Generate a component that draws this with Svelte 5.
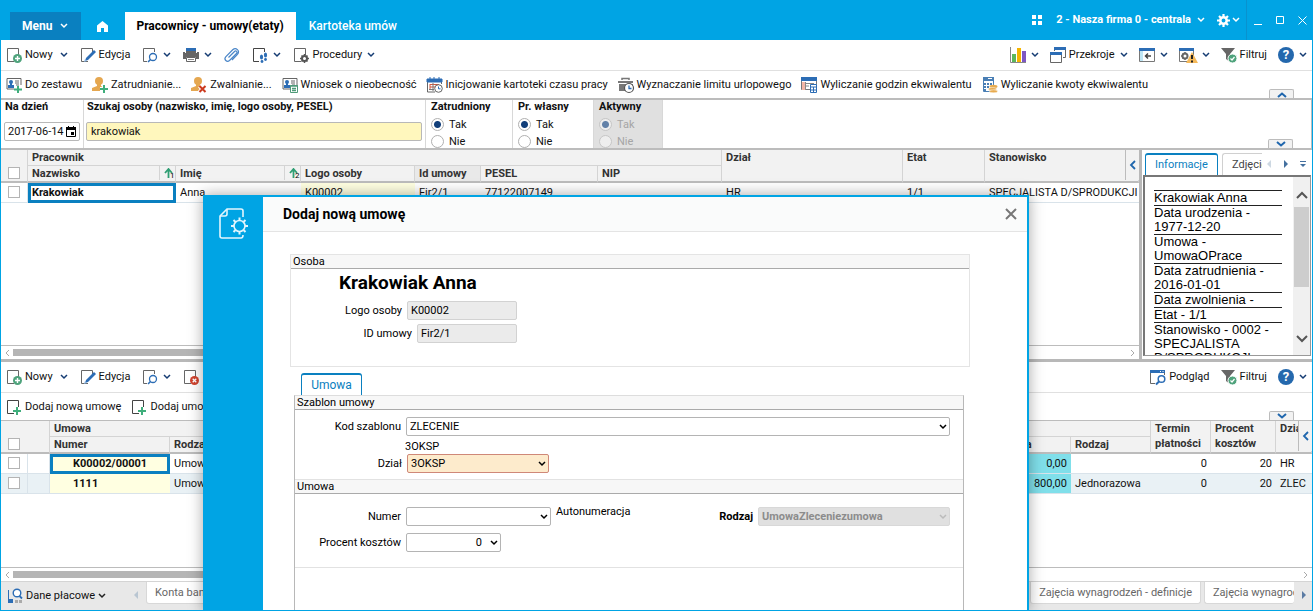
<script>
	let day = $state('2017-06-14');
	let search = $state('krakowiak');
	let employed = $state('Tak');
	let own = $state('Tak');
	let active = $state('Tak');
	let template = $state('ZLECENIE');
	let department = $state('3OKSP');
	let number = $state('');
	let percent = $state('0');

	const actions = [
		{ icon: 'set', label: 'Do zestawu' },
		{ icon: 'hire', label: 'Zatrudnianie...' },
		{ icon: 'fire', label: 'Zwalnianie...' },
		{ icon: 'absence', label: 'Wniosek o nieobecność' },
		{ icon: 'calendar', label: 'Inicjowanie kartoteki czasu pracy' },
		{ icon: 'leave', label: 'Wyznaczanie limitu urlopowego' },
		{ icon: 'hours', label: 'Wyliczanie godzin ekwiwalentu' },
		{ icon: 'amount', label: 'Wyliczanie kwoty ekwiwalentu' }
	];

	const info = [
		'Krakowiak Anna',
		'Data urodzenia - 1977-12-20',
		'Umowa - UmowaOPrace',
		'Data zatrudnienia - 2016-01-01',
		'Data zwolnienia -',
		'Etat - 1/1',
		'Stanowisko - 0002 - SPECJALISTA D/SPRODUKCJI'
	];

	const contracts = [
		{ number: 'K00002/00001', kind: 'UmowaZlecenie', amount: '0,00', type: '', term: 0, percent: 20, dept: 'HR' },
		{ number: '1111', kind: 'UmowaZlecenie', amount: '800,00', type: 'Jednorazowa', term: 0, percent: 20, dept: 'ZLEC' }
	];
</script>

{#snippet chevron(cls = '')}
	<svg class="chev {cls}" width="8" height="6" viewBox="0 0 8 6"><path d="M1 1l3 3 3-3" fill="none" stroke="currentColor" stroke-width="1.5" /></svg>
{/snippet}

{#snippet page()}
	<path d="M8 14.5H1.500V1.500H12.500V8" fill="none" stroke="#666" />
{/snippet}

{#snippet person()}
	<circle cx="7" cy="4" r="4" fill="#e5a750" />
	<path d="M5 6h4v3l4 2v3H0v-3l5-2z" fill="#e5a750" />
{/snippet}

{#snippet card()}
	<path d="M1 12V1.500H15V8M8 12H1" fill="none" stroke="#666" />
	<circle cx="5" cy="5" r="2" fill="#2c6db5" />
	<path d="M2 11V8h6v3zM4 6h2v3H4z" fill="#2c6db5" />
	<path d="M9 4h4M9 6h4M10 8h3" stroke="#666" />
{/snippet}

{#snippet icon(name)}
	<svg class="icon" width="16" height="16" viewBox="0 0 16 16" aria-hidden="true">
		{#if name === 'new'}
			{@render page()}
			<circle cx="11.500" cy="11.500" r="4.500" fill="#4fa37c" />
			<path d="M9 11.500h5M11.500 9v5" stroke="#fff" stroke-width="1.400" />
		{:else if name === 'edit'}
			{@render page()}
			<path d="M5 14l1-3 8-8 2 2-8 8z" fill="#2c6db5" />
			<path d="M4 15l1-3 2 2z" fill="#8ab4e0" />
		{:else if name === 'find'}
			<path d="M5 14.500H1.500V1.500H12.500V5" fill="none" stroke="#666" />
			<circle cx="11" cy="10" r="3.500" fill="#fff" stroke="#2c6db5" stroke-width="1.300" />
			<path d="M8.500 12.500L6 15" stroke="#2c6db5" stroke-width="1.600" />
		{:else if name === 'delete'}
			{@render page()}
			<circle cx="11.500" cy="11.500" r="4.500" fill="#d0432e" />
			<path d="M9.700 9.700l3.600 3.600M13.300 9.700l-3.600 3.600" stroke="#fff" stroke-width="1.300" />
		{:else if name === 'print'}
			<path d="M3 1h10v4H3z" fill="#2c6db5" />
			<path d="M0 5h2v1h12V5h2v7h-3v-2H3v2H0z" fill="#666" />
			<path d="M3 4h10v2H3z" fill="#666" />
			<path d="M3.500 10.500h9v4h-9z" fill="#fff" stroke="#666" />
			<path d="M5 12.500h6" stroke="#888" />
		{:else if name === 'clip'}
			<path d="M4.500 10.500l6-6c1.500-1.500 3.500.5 2 2l-7 7c-2.600 2.200-6-1-3.800-3.700l7-7c3.300-3 7.600 1 4.800 4.500l-5.500 5.700" fill="none" stroke="#4a86c8" stroke-width="1.200" />
		{:else if name === 'steps'}
			<path d="M7 14.500H1.500V1.500H12.500V5" fill="none" stroke="#444" />
			<ellipse cx="9.500" cy="10" rx="1.600" ry="2.600" fill="#2c6db5" />
			<ellipse cx="13.500" cy="8" rx="1.600" ry="2.600" fill="#2c6db5" />
			<circle cx="10" cy="14.500" r="1.400" fill="#2c6db5" />
			<circle cx="13.500" cy="12.500" r="1.400" fill="#2c6db5" />
		{:else if name === 'proc'}
			{@render page()}
			<circle cx="11.500" cy="11.500" r="2.500" fill="#fff" stroke="#555" stroke-width="2" />
			<path d="M11.500 7v2M11.500 14v2M7 11.500h2M14 11.500h2M8.500 8.500l1 1M13.500 13.500l1 1M14.500 8.500l-1 1M9.500 13.500l-1 1" stroke="#555" stroke-width="1.500" />
		{:else if name === 'add'}
			<path d="M8 14.500H1.500V1.500H12.500V8" fill="none" stroke="#444" />
			<path d="M7 12h8M11 8v8" stroke="#3fae7c" stroke-width="2" />
		{:else if name === 'set'}
			{@render card()}
			<path d="M8 12.500h8M12 9v7" stroke="#3fae7c" stroke-width="2" />
		{:else if name === 'hire'}
			{@render person()}
			<path d="M8 12h8M12 8v8" stroke="#fff" stroke-width="4" />
			<path d="M8 12h8M12 8v8" stroke="#3fae7c" stroke-width="2" />
		{:else if name === 'fire'}
			{@render person()}
			<path d="M8.500 9l6 6M14.500 9l-6 6" stroke="#fff" stroke-width="4" />
			<path d="M8.500 9l6 6M14.500 9l-6 6" stroke="#cc3a1e" stroke-width="2" />
		{:else if name === 'absence'}
			{@render card()}
			<path d="M8.500 8.500h7v7h-7z" fill="#fff" stroke="#4f9a78" />
			<path d="M8 9h8M10 11.500h4M10 13.500h4" stroke="#4f9a78" stroke-width="1.300" />
		{:else if name === 'calendar'}
			<path d="M.5 3v12H8M14.500 3v4" fill="none" stroke="#666" />
			<path d="M0 2h15v3H0zM3 0v3M7 0v3M12 0v3" fill="#2c6db5" stroke="#2c6db5" />
			<path d="M3 7.500h9M3 7v6M3 10h5" stroke="#d0573e" fill="none" />
			<path d="M6 6v8M2 12.500h5" stroke="#777" fill="none" />
			<circle cx="11.500" cy="11.500" r="3.800" fill="#fff" stroke="#666" />
			<path d="M11.500 9.500v2.300h2" stroke="#2c6db5" fill="none" />
		{:else if name === 'leave'}
			<path d="M4 3V1.500h7V3" fill="none" stroke="#777" stroke-width="1.500" />
			<path d="M0 4h15v2H0zM1 7h14v7H1z" fill="#777" />
			<circle cx="11" cy="11" r="4.500" fill="#fff" stroke="#555" stroke-width="1.200" />
			<path d="M11 8.500v3h2.500" stroke="#2c6db5" stroke-width="1.300" fill="none" />
		{:else if name === 'hours'}
			<path d="M.5.5h15v12H.5z" fill="#fff" stroke="#777" />
			<path d="M0 0h16v4H0z" fill="#2c6db5" />
			<path d="M1 5h3v8H1z" fill="#f3b5a5" />
			<path d="M5 6.500h8M5 9h3M4.500 5v8" stroke="#888" />
			<path d="M9.500 7.500h6v8h-6zM9.500 10h6M12.500 10v5.500M9.500 13h6" fill="#fff" stroke="#2c6db5" />
		{:else if name === 'amount'}
			<path d="M1.500.5h10v14h-10z" fill="#fff" stroke="#4a7fb5" />
			<path d="M1 0h11v4H1zM2 6h2v2H2zM5 6h2v2H5zM8 6h2v2H8zM2 9h2v2H2zM5 9h2v2H5zM2 12h2v2H2z" fill="#4a7fb5" />
			<path d="M6 1.500h4" stroke="#fff" />
			<ellipse cx="11.500" cy="9.500" rx="4" ry="1.700" fill="#e8ab4f" />
			<ellipse cx="10.500" cy="12" rx="4" ry="1.500" fill="#e8ab4f" stroke="#fff" stroke-width=".5" />
			<ellipse cx="11.500" cy="14.300" rx="4" ry="1.500" fill="#e8ab4f" stroke="#fff" stroke-width=".5" />
		{:else if name === 'chart'}
			<path d="M.5 0v15.500H16" fill="none" stroke="#888" />
			<path d="M2 7h4v8H2z" fill="#5cb85c" />
			<path d="M7 1h4v14H7z" fill="#f5b400" />
			<path d="M12 4h4v11h-4z" fill="#7e57c2" />
		{:else if name === 'windows'}
			<path d="M4.500 4V1M15.500 1v9.500H13" fill="none" stroke="#666" />
			<path d="M4 0h12v3H4z" fill="#2c6db5" />
			<path d="M.5 6.500h11v9H.5z" fill="#fff" stroke="#666" />
			<path d="M0 5h12v3H0z" fill="#2c6db5" />
		{:else if name === 'panel'}
			<path d="M.5 1.500h15v13H.5z" fill="#fff" stroke="#777" />
			<path d="M1 4h3v10H1z" fill="#bfe6f5" />
			<path d="M0 1h16v3H0z" fill="#2c6db5" />
			<path d="M12 9H7M9 6.500L6.500 9 9 11.500" fill="none" stroke="#444" stroke-width="1.500" />
		{:else if name === 'warning'}
			<path d="M.5 1.500h14v13H.5z" fill="#fff" stroke="#777" />
			<path d="M0 1h15v3H0z" fill="#2c6db5" />
			<circle cx="6" cy="9" r="2.500" fill="none" stroke="#666" stroke-width="2" />
			<path d="M6 5v2M6 11v2M2 9h2M3.500 6.500l1 1M3.500 11.500l1-1" stroke="#666" stroke-width="1.500" />
			<path d="M13 5l6 11H7z" fill="#f5b95a" />
			<path d="M13 8v4M13 13.500v2" stroke="#222" stroke-width="2" />
		{:else if name === 'filter'}
			<path d="M0 1h14L9 7v8l-4-3V7z" fill="#666" />
			<circle cx="11.500" cy="11.500" r="4.500" fill="#4fa37c" stroke="#fff" />
			<path d="M9.500 11.500l1.500 1.500 2.500-3" fill="none" stroke="#fff" stroke-width="1.200" />
		{:else if name === 'preview'}
			<path d="M5 14.500H.5V1.500h14V6" fill="none" stroke="#666" />
			<path d="M0 1h15v3H0z" fill="#2c6db5" />
			<path d="M10 2.500h1M12.500 2.500h1" stroke="#fff" />
			<circle cx="11.500" cy="10" r="3.300" fill="#fff" stroke="#2c6db5" stroke-width="1.500" />
			<path d="M9 12.500L6 15.500" stroke="#2c6db5" stroke-width="2" />
		{:else if name === 'pay'}
			<path d="M1.500 2v13" stroke="#2c6db5" />
			<path d="M1 11h5v4H1z" fill="#2c6db5" />
			<circle cx="10" cy="5" r="3.800" fill="#fff" stroke="#2c6db5" stroke-width="1.400" />
			<path d="M12.500 8L15 10.500" stroke="#2c6db5" stroke-width="1.800" />
			<path d="M8 12h3v3H8zM12 12h3v3h-3z" fill="#aaa" />
		{/if}
	</svg>
{/snippet}

{#snippet help()}
	<button class="tool" aria-label="Pomoc"><span class="help">?</span>{@render chevron()}</button>
{/snippet}

{#snippet yesNo(title, name, value, off)}
	<fieldset class="choice" class:off disabled={off}>
		<legend>{title}</legend>
		<label><input type="radio" {name} value="Tak" checked={value === 'Tak'} />Tak</label>
		<label><input type="radio" {name} value="Nie" checked={value === 'Nie'} />Nie</label>
	</fieldset>
{/snippet}

{#snippet sorted(n)}
	<span class="sort"><svg width="10" height="10" viewBox="0 0 10 10"><path d="M4.500 10V1M1 5l3.500-4L8 5" fill="none" stroke="#2f9e73" stroke-width="1.800" /></svg><small>{n}</small></span>
{/snippet}

{#snippet scroller()}
	<div class="scroller">
		<svg width="5" height="8" viewBox="0 0 5 8"><path d="M4 1L1 4l3 3" fill="none" stroke="#aaa" /></svg>
		<div class="track"><div class="thumb"></div></div>
		<svg width="5" height="8" viewBox="0 0 5 8"><path d="M1 1l3 3-3 3" fill="none" stroke="#aaa" /></svg>
	</div>
{/snippet}

<div class="app">
	<header>
		<button class="menu">Menu {@render chevron('wide')}</button>
		<button class="home" aria-label="Start"><svg width="11" height="11" viewBox="0 0 11 11"><path d="M5.500 0L11 4.500V11H7V7H4v4H0V4.500z" fill="#fff" /></svg></button>
		<a class="tab current" href="#pracownicy">Pracownicy - umowy(etaty)</a>
		<a class="tab" href="#kartoteka">Kartoteka umów</a>
		<div class="company">
			<svg width="10" height="10" viewBox="0 0 10 10"><path d="M0 0h4v4H0zM6 0h4v4H6zM0 6h4v4H0zM6 6h4v4H6z" fill="#fff" /></svg>
			<button class="firm">2 - Nasza firma 0 - centrala {@render chevron()}</button>
			<button class="gear" aria-label="Ustawienia">
				<svg width="13" height="13" viewBox="0 0 13 13"><circle cx="6.500" cy="6.500" r="3.200" fill="none" stroke="#fff" stroke-width="2.500" /><path d="M6.500 0v3M6.500 10v3M0 6.500h3M10 6.500h3M2 2l2 2M9 9l2 2M11 2L9 4M4 9l-2 2" stroke="#fff" stroke-width="2.200" /></svg>
				{@render chevron()}
			</button>
		</div>
		<div class="window">
			<button aria-label="Minimalizuj"><svg width="9" height="9" viewBox="0 0 9 9"><path d="M0 8.500h8" stroke="#fff" /></svg></button>
			<button aria-label="Maksymalizuj"><svg width="9" height="9" viewBox="0 0 9 9"><path d="M.5.500h7v7h-7z" fill="none" stroke="#fff" /></svg></button>
			<button aria-label="Zamknij"><svg width="9" height="9" viewBox="0 0 9 9"><path d="M.5.500l8 8M8.500.500l-8 8" stroke="#fff" /></svg></button>
		</div>
	</header>

	<div class="toolbar">
		<button class="tool">{@render icon('new')}Nowy {@render chevron('far')}</button>
		<button class="tool">{@render icon('edit')}Edycja</button>
		<button class="tool" aria-label="Szukaj">{@render icon('find')}{@render chevron()}</button>
		<button class="tool" aria-label="Drukuj">{@render icon('print')}{@render chevron()}</button>
		<button class="tool" aria-label="Załączniki">{@render icon('clip')}</button>
		<button class="tool" aria-label="Kroki">{@render icon('steps')}{@render chevron()}</button>
		<button class="tool">{@render icon('proc')}Procedury {@render chevron()}</button>
		<div class="right">
			<button class="tool" aria-label="Wykres">{@render icon('chart')}{@render chevron()}</button>
			<button class="tool">{@render icon('windows')}Przekroje {@render chevron()}</button>
			<button class="tool" aria-label="Panel">{@render icon('panel')}{@render chevron()}</button>
			<button class="tool" aria-label="Ostrzeżenia">{@render icon('warning')}{@render chevron('far')}</button>
			<button class="tool">{@render icon('filter')}Filtruj</button>
			{@render help()}
		</div>
	</div>

	<div class="toolbar actions">
		{#each actions as a}
			<button class="tool">{@render icon(a.icon)}{a.label}</button>
		{/each}
		<button class="fold" aria-label="Zwiń"><svg class="up" width="12" height="7" viewBox="0 0 12 7"><path d="M2 1l4 3.500L10 1" fill="none" stroke="#1f66ad" stroke-width="2" /></svg></button>
	</div>

	<div class="filters">
		<div class="filter day">
			<label for="day">Na dzień</label>
			<div class="date">
				<input id="day" type="text" bind:value={day} />
				<svg width="10" height="11" viewBox="0 0 10 11"><path d="M.500 2h9v8.500h-9zM2.500 0v3M7.500 0v3" fill="none" stroke="#000" /><path d="M0 1h10v3H0zM5 6h3v3H5z" /></svg>
			</div>
		</div>
		<div class="filter query">
			<label for="query">Szukaj osoby (nazwisko, imię, logo osoby, PESEL)</label>
			<input id="query" type="text" bind:value={search} />
		</div>
		{@render yesNo('Zatrudniony', 'employed', employed, false)}
		{@render yesNo('Pr. własny', 'own', own, false)}
		{@render yesNo('Aktywny', 'active', active, true)}
		<button class="fold" aria-label="Rozwiń"><svg width="12" height="7" viewBox="0 0 12 7"><path d="M2 1l4 3.500L10 1" fill="none" stroke="#1f66ad" stroke-width="2" /></svg></button>
	</div>

	<div class="upper">
		<div class="grid">
			<div class="rows">
				<table class="people">
					<colgroup>
						<col class="w-check" /><col class="w-name" /><col class="w-first" /><col class="w-logo" /><col class="w-id" />
						<col class="w-pesel" /><col class="w-nip" /><col class="w-dept" /><col class="w-etat" /><col />
					</colgroup>
					<thead>
						<tr>
							<th rowspan="2" class="low"><input type="checkbox" aria-label="Zaznacz wszystkie" /></th>
							<th colspan="6" class="group">Pracownik</th>
							<th rowspan="2">Dział</th>
							<th rowspan="2">Etat</th>
							<th rowspan="2">Stanowisko</th>
						</tr>
						<tr>
							<th><div class="sortable">Nazwisko {@render sorted(1)}</div></th>
							<th><div class="sortable">Imię {@render sorted(2)}</div></th>
							<th>Logo osoby</th>
							<th class="dim">Id umowy</th>
							<th>PESEL</th>
							<th>NIP</th>
						</tr>
					</thead>
					<tbody>
						<tr>
							<td class="check"><input type="checkbox" aria-label="Zaznacz" /></td>
							<td class="picked">Krakowiak</td>
							<td>Anna</td>
							<td class="key">K00002</td>
							<td>Fir2/1</td>
							<td>77122007149</td>
							<td></td>
							<td>HR</td>
							<td>1/1</td>
							<td>SPECJALISTA D/SPRODUKCJI</td>
						</tr>
					</tbody>
				</table>
				<button class="side-fold" aria-label="Kolumny"><svg width="7" height="10" viewBox="0 0 7 10"><path d="M6 1L2 5l4 4" fill="none" stroke="#1f66ad" stroke-width="1.800" /></svg></button>
			</div>
			{@render scroller()}
		</div>
		<aside>
			<nav>
				<a class="side-tab on" href="#informacje">Informacje</a>
				<a class="side-tab" href="#zdjecie">Zdjęcie</a>
				<svg width="40" height="8" viewBox="0 0 40 8"><path d="M5 0v8L1 4z" fill="#cdd8e2" /><path d="M18 0v8l4-4z" fill="#44709f" /><path d="M34 1.500h6" stroke="#44709f" /><path d="M34 4h6l-3 3z" fill="#44709f" /></svg>
			</nav>
			<div class="info">
				<ul>
					{#each info as line}
						<li>{line}</li>
					{/each}
				</ul>
				<div class="vscroll">
					<svg width="12" height="8" viewBox="0 0 12 8"><path d="M1 7l5-5 5 5" fill="none" stroke="#555" stroke-width="2" /></svg>
					<div class="vtrack"><div class="vthumb"></div></div>
					<svg width="12" height="8" viewBox="0 0 12 8"><path d="M1 1l5 5 5-5" fill="none" stroke="#555" stroke-width="2" /></svg>
				</div>
			</div>
		</aside>
	</div>

	<div class="lower">
		<div class="toolbar">
			<button class="tool">{@render icon('new')}Nowy {@render chevron('far')}</button>
			<button class="tool">{@render icon('edit')}Edycja</button>
			<button class="tool" aria-label="Szukaj">{@render icon('find')}{@render chevron()}</button>
			<button class="tool" aria-label="Usuń">{@render icon('delete')}</button>
			<div class="right">
				<button class="tool">{@render icon('preview')}Podgląd</button>
				<button class="tool">{@render icon('filter')}Filtruj</button>
				{@render help()}
			</div>
		</div>
		<div class="toolbar actions second">
			<button class="tool">{@render icon('add')}Dodaj nową umowę</button>
			<button class="tool">{@render icon('add')}Dodaj umowę</button>
			<button class="fold" aria-label="Rozwiń"><svg width="12" height="7" viewBox="0 0 12 7"><path d="M2 1l4 3.500L10 1" fill="none" stroke="#1f66ad" stroke-width="2" /></svg></button>
		</div>
		<div class="rows">
			<table class="contracts">
				<colgroup>
					<col class="w-check" /><col class="w-mark" /><col class="w-number" /><col /><col class="w-amount" />
					<col class="w-type" /><col class="w-term" /><col class="w-percent" /><col class="w-last" />
				</colgroup>
				<thead>
					<tr>
						<th colspan="2" rowspan="2" class="low"><input type="checkbox" aria-label="Zaznacz wszystkie" /></th>
						<th colspan="4" class="group">Umowa</th>
						<th rowspan="2">Termin płatności</th>
						<th rowspan="2">Procent kosztów</th>
						<th rowspan="2">Dział</th>
					</tr>
					<tr>
						<th>Numer</th>
						<th>Rodzaj</th>
						<th>Kwota</th>
						<th>Rodzaj</th>
					</tr>
				</thead>
				<tbody>
					{#each contracts as c, i}
						<tr>
							<td class="check"><input type="checkbox" aria-label="Zaznacz" /></td>
							<td class="mark"></td>
							<td class="number key" class:picked={i === 0}>{c.number}</td>
							<td>{c.kind}</td>
							<td class="num amount">{c.amount}</td>
							<td>{c.type}</td>
							<td class="num">{c.term}</td>
							<td class="num">{c.percent}</td>
							<td>{c.dept}</td>
						</tr>
					{/each}
				</tbody>
			</table>
			<button class="side-fold" aria-label="Kolumny"><svg width="7" height="10" viewBox="0 0 7 10"><path d="M6 1L2 5l4 4" fill="none" stroke="#1f66ad" stroke-width="1.800" /></svg></button>
		</div>
		{@render scroller()}
		<footer>
			<button class="tool">{@render icon('pay')}Dane płacowe {@render chevron('dark')}</button>
			<svg class="prev" width="4" height="8" viewBox="0 0 4 8"><path d="M4 0v8L0 4z" fill="#b9c6d2" /></svg>
			<nav>
				<a class="foot-tab" href="#konta">Konta bankowe</a>
				<a class="foot-tab push" href="#definicje">Zajęcia wynagrodzeń - definicje</a>
				<a class="foot-tab cut" href="#zajecia">Zajęcia wynagrodzeń</a>
			</nav>
			<svg class="next" width="4" height="8" viewBox="0 0 4 8"><path d="M0 0v8l4-4z" fill="#5b7ba3" /></svg>
		</footer>
	</div>

	<div class="dialog" role="dialog" aria-labelledby="dialog-title">
		<div class="stripe">
			<svg width="30" height="32" viewBox="0 0 30 32" fill="none" stroke="#e3f5fd" stroke-width="1.600">
				<path d="M24 9V3q0-2-2-2H8L1 8v20q0 2 2 2h19q2 0 2-3" />
				<path d="M1 8h5q2 0 2-2V1" />
				<circle cx="20.500" cy="18" r="5.500" />
				<path d="M20.500 9.500v3M20.500 23.500v3M12 18h3M26 18h3M14.500 12l2 2M24.500 22l2 2M26.500 12l-2 2M16.500 22l-2 2" stroke-width="2" />
			</svg>
		</div>
		<div class="sheet">
			<div class="title">
				<h2 id="dialog-title">Dodaj nową umowę</h2>
				<button aria-label="Zamknij okno"><svg width="12" height="12" viewBox="0 0 12 12"><path d="M1 1l10 10M11 1L1 11" stroke="#777" stroke-width="2" /></svg></button>
			</div>
			<section class="person">
				<h3>Osoba</h3>
				<h1>Krakowiak Anna</h1>
				<div class="line"><label for="logo">Logo osoby</label><input id="logo" type="text" value="K00002" readonly /></div>
				<div class="line shifted"><label for="contract-id">ID umowy</label><input id="contract-id" type="text" value="Fir2/1" readonly /></div>
			</section>
			<a class="form-tab" href="#umowa">Umowa</a>
			<div class="form">
				<section>
					<h3>Szablon umowy</h3>
					<div class="field first">
						<label for="template">Kod szablonu</label>
						<span class="select wide">
							<select id="template" bind:value={template}><option>ZLECENIE</option></select>
							{@render chevron('drop')}
						</span>
					</div>
					<p>3OKSP</p>
					<div class="field last">
						<label for="department">Dział</label>
						<span class="select warm">
							<select id="department" bind:value={department}><option>3OKSP</option></select>
							{@render chevron('drop')}
						</span>
					</div>
				</section>
				<section class="details">
					<h3>Umowa</h3>
					<div class="field numbering">
						<label for="number">Numer</label>
						<span class="select">
							<select id="number" bind:value={number}><option></option></select>
							{@render chevron('drop')}
						</span>
						<span class="auto">Autonumeracja</span>
						<label class="kind" for="kind">Rodzaj</label>
						<span class="select off">
							<select id="kind" disabled><option>UmowaZleceniezumowa</option></select>
							{@render chevron('drop')}
						</span>
					</div>
					<div class="field">
						<label for="percent">Procent kosztów</label>
						<span class="select short">
							<select id="percent" bind:value={percent}><option>0</option></select>
							{@render chevron('drop')}
						</span>
					</div>
				</section>
			</div>
		</div>
	</div>
</div>

<style>
	:global(body) {
		margin: 0;
		font: 11px/14px Roboto, sans-serif;
		color: #111;
	}

	* {
		box-sizing: border-box;
	}

	button,
	input,
	select {
		font: inherit;
		color: inherit;
		margin: 0;
	}

	button {
		display: flex;
		align-items: center;
		padding: 0;
		border: 0;
		background: none;
		white-space: nowrap;
	}

	a {
		color: inherit;
		text-decoration: none;
		white-space: nowrap;
	}

	svg {
		display: block;
		flex: none;
	}

	h1,
	h2,
	h3,
	p,
	ul {
		margin: 0;
		padding: 0;
	}

	.app {
		position: relative;
		display: flex;
		flex-direction: column;
		height: 100vh;
		overflow: hidden;
		background: #fff;
		border: 1px solid #00a4e4;
		border-top: 0;
	}

	/* title bar */
	header {
		display: flex;
		flex: none;
		height: 40px;
		background: #00a4e4;
		color: #fff;
		font-size: 12px;
	}

	.menu {
		height: 28px;
		margin: 12px 0 0 9px;
		padding: 0 13px 0 12px;
		gap: 8px;
		background: #0a80c0;
		font-weight: bold;
	}

	.home {
		margin: 12px 17px 0 16px;
	}

	.tab {
		height: 28px;
		margin-top: 12px;
		padding: 0 13px;
		line-height: 28px;
		font-weight: 500;
	}

	.tab.current {
		padding: 0 12px 0 11px;
		background: #fff;
		color: #000;
		font-weight: bold;
	}

	.company {
		display: flex;
		align-items: center;
		margin-left: auto;
		padding-right: 6px;
		font-size: 11px;
		font-weight: bold;
	}

	.firm {
		margin: 0 12px 0 14px;
		gap: 6px;
	}

	.gear {
		gap: 2px;
	}

	.window {
		display: flex;
		align-items: center;
		gap: 13px;
		padding: 0 5px 0 7px;
		border-left: 1px solid #0992ce;
	}

	/* toolbars */
	.toolbar {
		position: relative;
		display: flex;
		flex: none;
		align-items: center;
		gap: 12px;
		height: 31px;
		padding: 0 5px;
		border-bottom: 1px solid #e0e0e0;
	}

	.toolbar.actions {
		gap: 10px;
		height: 29px;
		border-bottom: 2px solid #bcbcbc;
	}

	.toolbar.second {
		height: 28px;
		border-bottom: 1px solid #bcbcbc;
	}

	.right {
		display: flex;
		align-items: center;
		gap: 11px;
		margin-left: auto;
	}

	.tool {
		gap: 3px;
	}

	.tool .icon {
		overflow: visible;
	}

	.tool .chev {
		margin-left: 2px;
		color: #153c73;
	}

	.tool .chev.far {
		margin-left: 4px;
	}

	.tool .chev.dark {
		margin-left: 0;
		color: #222;
	}

	.help {
		width: 16px;
		height: 16px;
		border-radius: 8px;
		background: #2468ad;
		color: #fff;
		font-size: 13px;
		font-weight: bold;
		line-height: 16px;
		text-align: center;
	}

	.fold {
		position: absolute;
		right: 18px;
		bottom: 0;
		width: 25px;
		height: 9px;
		justify-content: center;
		background: #f2f2f2;
		border: 1px solid #bcbcbc;
		border-bottom: 0;
		border-radius: 2px 2px 0 0;
	}

	.fold .up {
		transform: rotate(180deg);
	}

	/* filters */
	.filters {
		position: relative;
		display: flex;
		flex: none;
		height: 50px;
		border-bottom: 2px solid #bcbcbc;
		border-right: 1px solid #bcbcbc;
	}

	.filter {
		padding: 0 3px;
		border-right: 1px solid #d8d8d8;
	}

	.filter label,
	legend {
		display: block;
		font-weight: bold;
		line-height: 14px;
	}

	.filter.day {
		width: 83px;
	}

	.filter.query {
		width: 342px;
		padding: 0 3px 0 2px;
	}

	.day label {
		padding-left: 1px;
	}

	.query label {
		padding-left: 1px;
	}

	.date,
	.query input {
		width: 100%;
		height: 19px;
		margin-top: 8px;
		border: 1px solid #b8b8b8;
		border-radius: 2px;
	}

	.date {
		display: flex;
		align-items: center;
		padding: 0 3px 0 0;
	}

	.date input {
		flex: 1;
		min-width: 0;
		padding: 0 0 0 3px;
		border: 0;
		background: none;
	}

	.query input {
		padding: 0 4px;
		background: #fff7bd;
	}

	.choice {
		width: 87px;
		margin: 0;
		padding: 0 5px;
		border: 0;
		border-right: 1px solid #d8d8d8;
	}

	.choice + .choice {
		width: 81px;
	}

	.choice.off {
		width: 69px;
		background: #e0e0e0;
	}

	/* floated so the fieldset starts above its legend */
	legend {
		float: left;
		width: 100%;
		padding: 0 0 2px;
	}

	.choice label {
		display: flex;
		clear: both;
		align-items: center;
		gap: 5px;
		height: 17px;
	}

	.choice.off label {
		color: #a5a5a5;
	}

	input[type='radio'] {
		appearance: none;
		width: 13px;
		height: 13px;
		border: 1px solid #b0b0b0;
		border-radius: 7px;
		background: #fff;
	}

	input[type='radio']:checked {
		background: radial-gradient(circle, #123f7a 0 3px, #fff 4px);
	}

	.off input[type='radio'] {
		border-color: #c6c6c6;
		background: #eee;
	}

	.off input[type='radio']:checked {
		background: radial-gradient(circle, #6281a8 0 3px, #eee 4px);
	}

	/* data grids */
	.upper {
		display: flex;
		flex: 209 1 0;
		min-height: 0;
		border-bottom: 3px solid #b8b8b8;
	}

	.lower {
		display: flex;
		flex: 248 1 0;
		flex-direction: column;
		min-height: 0;
	}

	.grid {
		display: flex;
		flex: 1;
		flex-direction: column;
		min-width: 0;
	}

	.rows {
		position: relative;
		flex: 1;
		min-height: 0;
		overflow: hidden;
	}

	table {
		width: 100%;
		table-layout: fixed;
		border-collapse: separate;
		border-spacing: 0;
	}

	th,
	td {
		padding: 0 4px;
		overflow: hidden;
		text-align: left;
		vertical-align: top;
		white-space: nowrap;
	}

	th {
		height: 16px;
		background: #f2f2f2;
		color: #333;
		line-height: 15px;
		border-right: 1px solid #d4d4d4;
		border-bottom: 2px solid #bcbcbc;
	}

	th[rowspan] {
		white-space: normal;
	}

	th.group {
		border-bottom: 1px solid #d4d4d4;
	}

	th.dim {
		background: #e9e9e9;
	}

	th.low {
		padding: 0 7px 2px;
		vertical-align: bottom;
	}

	td {
		height: 20px;
		line-height: 19px;
		border-bottom: 1px solid #d9e3ea;
	}

	.check {
		padding: 3px 7px 0;
		border-right: 1px solid #d9e3ea;
	}

	.mark {
		border-right: 1px solid #d9e3ea;
	}

	input[type='checkbox'] {
		display: block;
		appearance: none;
		width: 12px;
		height: 12px;
		border: 1px solid #b4b4b4;
		background: #fff;
	}

	.sortable {
		display: flex;
		justify-content: space-between;
		height: 14px;
	}

	.sort {
		display: flex;
		align-items: center;
		width: 16px;
		margin-right: -4px;
		padding-left: 4px;
		border-left: 1px solid #d4d4d4;
	}

	.sort small {
		margin-left: -4px;
		align-self: flex-end;
		font-size: 8px;
		font-weight: normal;
		line-height: 8px;
		color: #000;
	}

	td.key {
		background: #ffffe1;
	}

	td.picked {
		padding: 0 1px;
		border: 3px solid #0a80c0;
		font-weight: bold;
		line-height: 14px;
	}

	td.number {
		padding-left: 23px;
		font-weight: bold;
	}

	td.number.picked {
		padding-left: 20px;
	}

	td.num {
		text-align: right;
	}

	td.amount {
		background: #80dfea;
	}

	.contracts tbody tr:nth-child(2) {
		background: #e9f1f5;
	}

	.w-check { width: 27px; }
	.w-name { width: 148px; }
	.w-first { width: 125px; }
	.w-logo { width: 114px; }
	.w-id { width: 66px; }
	.w-pesel { width: 117px; }
	.w-nip { width: 124px; }
	.w-dept { width: 181px; }
	.w-etat { width: 82px; }
	.w-mark { width: 22px; }
	.w-number { width: 120px; }
	.w-amount { width: 74px; }
	.w-type { width: 80px; }
	.w-term { width: 60px; }
	.w-percent { width: 65px; }
	.w-last { width: 36px; }

	.side-fold {
		position: absolute;
		top: 0;
		right: 0;
		width: 14px;
		height: 30px;
		justify-content: center;
		background: #f2f2f2;
		border-left: 1px solid #bcbcbc;
	}

	.scroller {
		display: flex;
		flex: none;
		align-items: center;
		gap: 3px;
		height: 14px;
		padding: 0 4px;
		border-top: 1px solid #bcbcbc;
	}

	.track {
		flex: 1;
	}

	.thumb {
		width: 75%;
		height: 7px;
		background: #b5b5b5;
	}

	/* side panel */
	aside {
		display: flex;
		flex: none;
		flex-direction: column;
		width: 173px;
		border-left: 3px solid #b8b8b8;
	}

	aside nav {
		display: flex;
		align-items: center;
		height: 25px;
		padding: 3px 3px 0;
		gap: 4px;
	}

	.side-tab {
		width: 40px;
		height: 22px;
		padding: 0 0 0 9px;
		overflow: hidden;
		border: 1px solid #d0d0d0;
		border-bottom: 0;
		border-right: 0;
		border-radius: 3px 0 0 0;
		line-height: 22px;
		color: #444;
	}

	.side-tab.on {
		width: 73px;
		border: 1px solid #0a80c0;
		border-top-width: 2px;
		border-bottom: 0;
		border-radius: 3px 3px 0 0;
		line-height: 20px;
		color: #0a80c0;
	}

	.info {
		display: flex;
		flex: 1;
		min-height: 0;
		margin: 0 1px 3px;
		overflow: hidden;
		border: 1px solid #999;
		border-top: 2px solid #777;
		border-left: 2px solid #777;
	}

	.info ul {
		flex: 1;
		padding: 13px 10px 0 9px;
		overflow: hidden;
		list-style: none;
		font: 13px/14px 'Liberation Sans', Arial, sans-serif;
		color: #000;
	}

	.info li {
		width: 128px;
		border-top: 1px solid #222;
	}

	.vscroll {
		display: flex;
		flex-direction: column;
		align-items: center;
		gap: 8px;
		width: 17px;
		padding: 14px 0 12px;
		background: #f0f0f0;
	}

	.vtrack {
		flex: 1;
		width: 15px;
	}

	.vthumb {
		height: 67%;
		background: #cdcdcd;
	}

	/* bottom tabs */
	footer {
		display: flex;
		flex: none;
		height: 29px;
		padding-left: 6px;
		background: #e8e8e8;
		border-top: 1px solid #d4d4d4;
	}

	.prev {
		margin: 9px 8px 0 28px;
	}

	.next {
		margin: 9px 6px 0 8px;
	}

	footer nav {
		display: flex;
		flex: 1;
		min-width: 0;
		gap: 3px;
	}

	.foot-tab {
		height: 22px;
		padding: 0 8px;
		overflow: hidden;
		background: #fff;
		border: 1px solid #d8d8d8;
		border-top: 0;
		border-radius: 0 0 3px 3px;
		line-height: 22px;
		color: #666;
	}

	.foot-tab.push {
		margin-left: auto;
	}

	.foot-tab.cut {
		width: 90px;
		padding-right: 0;
		border-right: 0;
	}

	/* new contract dialog */
	.dialog {
		position: absolute;
		top: 195px;
		right: 283px;
		bottom: -1px;
		left: 202px;
		display: flex;
		background: #00a4e4;
		box-shadow: 0 0 14px rgba(0, 0, 0, 0.35);
		font-size: 11px;
		color: #000;
	}

	.stripe {
		flex: none;
		width: 60px;
		padding: 13px 0 0 16px;
	}

	.sheet {
		flex: 1;
		margin: 2px 2px 0 0;
		background: #fff;
	}

	.title {
		display: flex;
		justify-content: space-between;
		align-items: center;
		height: 35px;
		padding: 0 10px 0 20px;
		background: #fafbfb;
		border-bottom: 1px solid #e4e4e4;
	}

	h2 {
		font-size: 14px;
		font-weight: bold;
		line-height: 16px;
	}

	h3 {
		height: 14px;
		padding-left: 2px;
		background: #f7f7f7;
		border-bottom: 1px solid #aaa;
		font-size: 11px;
		font-weight: normal;
		line-height: 14px;
	}

	.person {
		height: 113px;
		margin: 22px 57px 0 27px;
		border: 1px solid #e4e4e4;
	}

	h1 {
		margin: 4px 0 8px 48px;
		font-size: 19px;
		font-weight: bold;
		line-height: 20px;
	}

	.line {
		display: flex;
		align-items: center;
		gap: 5px;
		width: 226px;
		height: 19px;
		margin-bottom: 4px;
	}

	.line label {
		width: 111px;
		text-align: right;
	}

	.line input {
		flex: 1;
		min-width: 0;
		height: 19px;
		padding: 0 3px;
		background: #ebebeb;
		border: 1px solid #d2d2d2;
		border-radius: 2px;
	}

	.line.shifted label {
		width: 121px;
	}

	.form-tab {
		display: block;
		width: 61px;
		height: 22px;
		margin: 6px 0 0 38px;
		border: 1px solid #0a80c0;
		border-top-width: 2px;
		border-bottom: 0;
		border-radius: 3px 3px 0 0;
		font-size: 12px;
		line-height: 20px;
		text-align: center;
		color: #0a80c0;
	}

	.form {
		height: 100%;
		margin: 0 63px 0 31px;
		border: 1px solid #b8b8b8;
		border-top-color: #ddd;
	}

	.form section {
		border-bottom: 1px solid #e2e2e2;
	}

	.field {
		display: flex;
		align-items: center;
		gap: 5px;
		height: 19px;
		margin-right: 13px;
	}

	.field.first {
		margin-top: 7px;
	}

	.field label {
		width: 106px;
		text-align: right;
	}

	.field.last label {
		width: 107px;
	}

	.field .kind {
		width: auto;
		margin-left: auto;
		font-weight: bold;
	}

	.form p {
		padding: 4px 0 0 110px;
	}

	.field.last {
		margin-bottom: 6px;
	}

	.details {
		height: 88px;
	}

	.field.numbering {
		margin: 13px 13px 7px 0;
	}

	.auto {
		align-self: flex-start;
		line-height: 10px;
	}

	.select {
		position: relative;
		width: 145px;
	}

	.select.wide {
		flex: 1;
	}

	.select.warm {
		width: 142px;
	}

	.select.short {
		width: 95px;
	}

	.select.off {
		width: 192px;
	}

	.select select {
		display: block;
		appearance: none;
		width: 100%;
		height: 19px;
		padding: 0 20px 0 3px;
		background: #fff;
		border: 1px solid #b4b4b4;
		border-radius: 2px;
		opacity: 1;
	}

	.warm select {
		background: #fdebcc;
		border-color: #cf8878;
	}

	.short select {
		padding-right: 18px;
		text-align: right;
		text-align-last: right;
	}

	.off select {
		background: #e0e0e0;
		border-color: #d8d8d8;
		color: #8c8c8c;
		font-weight: bold;
	}

	.select :global(.drop) {
		position: absolute;
		top: 7px;
		right: 3px;
		pointer-events: none;
	}

	.off :global(.drop) {
		color: #bbb;
	}
</style>
